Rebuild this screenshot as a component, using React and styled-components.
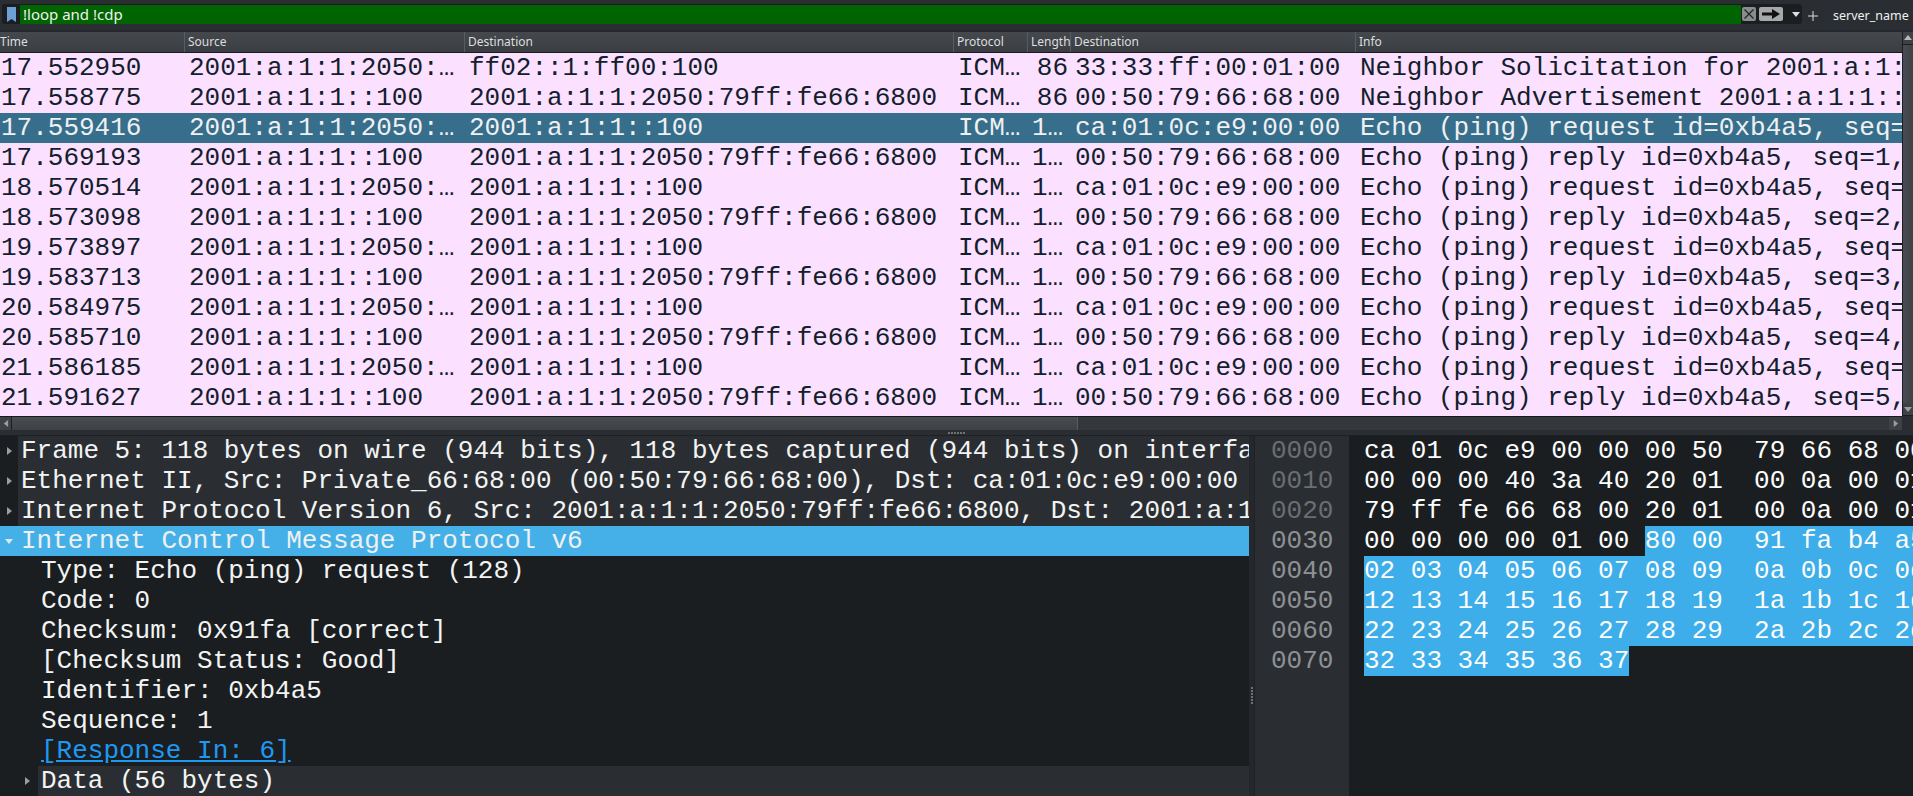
import React from "react";
import styled, { createGlobalStyle } from "styled-components";

const Global = createGlobalStyle`
  html, body { margin: 0; padding: 0; height: 100%; background: #2a2e32; overflow: hidden; }
  #root { height: 100%; }
`;

const Mono = `"Liberation Mono", monospace`;
const Sans = `"Noto Sans", sans-serif`;

const Page = styled.div`
  width: 1913px; height: 796px; display: flex; flex-direction: column;
  background: #2a2e32; overflow: hidden;
`;

/* Filter toolbar */
const Toolbar = styled.div`
  height: 32px; flex: none; display: flex; align-items: flex-start; box-sizing: border-box;
  padding: 4px 0 0 2px; background: #2a2e32; border-bottom: 2px solid #25282c;
`;
const FilterBox = styled.div`
  width: 1800px; height: 20px; display: flex; align-items: stretch; box-sizing: border-box;
  background: #1b1e20; border-radius: 3px; padding-top: 1px;
`;
const BookmarkSlot = styled.div`width: 18px; flex: none; display: flex; justify-content: center; align-items: center;`;
const FilterInput = styled.div`
  width: 1721px; flex: none; background: #006400; color: #eff0f1; font: 15px/19px ${Sans};
  padding-left: 3px; box-sizing: border-box; white-space: pre;
`;
const FilterButtons = styled.div`display: flex; align-items: center; padding: 0 0 1px 1px; gap: 3px;`;
const ClearButton = styled.div`
  width: 14px; height: 14px; background: #8a8c8e; border-radius: 2px; display: flex; align-items: center; justify-content: center;
`;
const ApplyButton = styled.div`
  width: 24px; height: 14px; background: #a6a8aa; border-radius: 2px; display: flex; align-items: center; justify-content: center;
`;
const Caret = styled.div`margin-left: 6px; display: flex;`;
const PlusButton = styled.div`margin-left: 6px; width: 10px; height: 24px; display: flex; align-items: center;`;
const ServerLabel = styled.div`margin-left: 15px; color: #eff0f1; font: 12.5px/24px ${Sans}; white-space: pre;`;

/* Packet list */
const ListArea = styled.div`height: 398px; flex: none; display: flex; flex-direction: column; background: #2a2e32;`;
const ListTop = styled.div`flex: 1; min-height: 0; display: flex;`;
const ListMain = styled.div`width: 1902px; flex: none; display: flex; flex-direction: column; overflow: hidden;`;
const HeaderRow = styled.div`
  height: 21px; flex: none; display: grid; grid-template-columns: var(--cols); box-sizing: border-box;
  background: linear-gradient(#45484c, #3a3d41); border-bottom: 1px solid #17191b;
`;
const HeaderCell = styled.div`
  font: 12px/20px ${Sans}; color: #dcdedf; white-space: nowrap; overflow: hidden;
  box-sizing: border-box; padding-left: ${p => (p.$first ? 0 : 3)}px; border-right: 1px solid #5a5d60;
  &:last-child { border-right: 0; }
`;
const Rows = styled.div`flex: 1; background: #fce0ff; overflow: hidden;`;
const Row = styled.div`
  height: 30px; display: grid; grid-template-columns: var(--cols);
  background: ${p => (p.$selected ? "#376e8c" : "#fce0ff")};
  color: ${p => (p.$selected ? "#eff0f1" : "#12202c")};
  font: 26px/30px ${Mono};
`;
const Cell = styled.div`
  white-space: pre; overflow: hidden; padding: 0 ${p => (p.$right ? 3 : 4)}px 0 ${p => (p.$first ? 1 : 4)}px;
  text-overflow: ${p => (p.$clip ? "clip" : "ellipsis")}; text-align: ${p => (p.$right ? "right" : "left")};
  min-width: 0;
`;
const VScroll = styled.div`
  width: 11px; flex: none; background: #34373b; display: flex; flex-direction: column; border-left: 1px solid #1b1e20; box-sizing: border-box;
`;
const VButton = styled.div`
  height: 13px; flex: none; background: #3e4145; display: flex; align-items: center; justify-content: center; border-bottom: 1px solid #1b1e20;
  box-sizing: border-box;
`;
const VThumb = styled.div`flex: 1; background: linear-gradient(90deg, #494c50, #3e4145);`;
const HScrollBar = styled.div`
  height: 14px; width: 1902px; flex: none; display: flex; background: #34373b; border-top: 1px solid #17191b; box-sizing: border-box;
`;
const HButton = styled.div`width: ${p => p.$width}px; flex: none; display: flex; align-items: center; justify-content: center; background: #3e4145; border: 0 solid #1b1e20; box-sizing: border-box;`;
const HThumb = styled.div`width: 1067px; flex: none; background: linear-gradient(#494c50, #3e4145); border-left: 1px solid #1b1e20; border-right: 1px solid #5a5d60; box-sizing: border-box;`;
const HTrough = styled.div`flex: 1;`;

const Splitter = styled.div`
  height: 6px; flex: none; display: flex; justify-content: center; align-items: center; background: #2a2e32; border-bottom: 1px solid #1f2225; box-sizing: border-box;
`;
const Grip = styled.div`
  display: flex; flex-direction: ${p => (p.$vertical ? "column" : "row")}; gap: 1px;
  & > i { display: block; width: 2px; height: 2px; background: #6e7174; }
`;

/* Lower panes */
const Lower = styled.div`flex: 1; display: flex; min-height: 0; background: #2a2e32;`;
const Tree = styled.div`width: 1249px; flex: none; background: #1b1e20; overflow: hidden;`;
const TreeRow = styled.div`
  height: 30px; display: flex; font: 26px/30px ${Mono}; white-space: pre; overflow: hidden;
  color: ${p => (p.$selected ? "#eff0f1" : "#f2f3f3")};
  background: ${p => (p.$selected ? "#45b0e8" : "#1b1e20")};
`;
const Gutter = styled.div`
  flex: none; width: ${p => p.$width}px; display: flex; align-items: center; justify-content: flex-end; padding-right: ${p => p.$pad || 5}px; box-sizing: border-box;
`;
const TreeLabel = styled.div`
  flex: 1; min-width: 0; overflow: hidden; padding-left: ${p => p.$pad ?? 3}px;
  background: ${p => (p.$shade ? "#2a2e32" : "transparent")};
`;
const LinkText = styled.span`color: #1d99f3; text-decoration: underline; text-underline-offset: 2px;`;
const Divider = styled.div`
  width: 6px; flex: none; background: #24272b; display: flex; align-items: flex-start; justify-content: center; padding-top: 251px; box-sizing: border-box;
  border-right: 1px solid #1f2225;
`;
const OffsetColumn = styled.div`
  width: 94px; flex: none; background: #2a2e32; padding-left: 16px; box-sizing: border-box;
`;
const OffsetLine = styled.div`font: 26px/30px ${Mono}; color: ${p => (p.$lit ? "#8e9193" : "#6b6e71")};`;
const HexColumn = styled.div`flex: 1; min-width: 0; background: #1b1e20; padding-left: 15px; overflow: hidden;`;
const HexLine = styled.div`height: 30px; font: 26px/30px ${Mono}; color: #fcfcfc; white-space: pre;`;
const HexMark = styled.span`background: #3daee9; display: inline-block; height: 30px; vertical-align: top;`;

const COLS = "185px 280px 489px 74px 43px 285px 546px";
const headers = ["Time", "Source", "Destination", "Protocol", "Length", "Destination", "Info"];
const H = "2001:a:1:1:2050:79ff:fe66:6800";
const L = "2001:a:1:1::100";
const req = (t, n) => [t, H, L, "ICMPv6", "118", "ca:01:0c:e9:00:00", `Echo (ping) request id=0xb4a5, seq=${n}, hop=64`];
const rep = (t, n) => [t, L, H, "ICMPv6", "118", "00:50:79:66:68:00", `Echo (ping) reply id=0xb4a5, seq=${n}, hop=64`];
const rows = [
  ["17.552950", H, "ff02::1:ff00:100", "ICMPv6", "86", "33:33:ff:00:01:00", "Neighbor Solicitation for 2001:a:1:1::100 from 00:50"],
  ["17.558775", L, H, "ICMPv6", "86", "00:50:79:66:68:00", "Neighbor Advertisement 2001:a:1:1::100 (rtr, sol, ovr)"],
  req("17.559416", 1), rep("17.569193", 1),
  req("18.570514", 2), rep("18.573098", 2),
  req("19.573897", 3), rep("19.583713", 3),
  req("20.584975", 4), rep("20.585710", 4),
  req("21.586185", 5), rep("21.591627", 5),
];

const hex = [
  ["0000", "ca 01 0c e9 00 00 00 50  79 66 68 00 86 dd 60 00", ""],
  ["0010", "00 00 00 40 3a 40 20 01  00 0a 00 01 00 01 20 50", ""],
  ["0020", "79 ff fe 66 68 00 20 01  00 0a 00 01 00 01 00 00", ""],
  ["0030", "00 00 00 00 01 00 ", "80 00  91 fa b4 a5 00 01 00 01"],
  ["0040", "", "02 03 04 05 06 07 08 09  0a 0b 0c 0d 0e 0f 10 11"],
  ["0050", "", "12 13 14 15 16 17 18 19  1a 1b 1c 1d 1e 1f 20 21"],
  ["0060", "", "22 23 24 25 26 27 28 29  2a 2b 2c 2d 2e 2f 30 31"],
  ["0070", "", "32 33 34 35 36 37"],
];

const Tri = ({ dir = "right", color = "#9b9d9f", size = 8 }) => {
  const pts = { right: "2,0 7,4 2,8", down: "0,2 8,2 4,7", left: "7,0 2,4 7,8", up: "0,6 8,6 4,1" }[dir];
  return <svg width={size} height={size} viewBox="0 0 8 8"><polygon points={pts} fill={color} /></svg>;
};

const GripDots = ({ vertical }) => (
  <Grip $vertical={vertical}>{Array.from({ length: 6 }).map((_, i) => <i key={i} />)}</Grip>
);

export default function App() {
  return (
    <Page style={{ "--cols": COLS }}>
      <Global />
      <Toolbar>
        <FilterBox>
          <BookmarkSlot>
            <svg width="9" height="15" viewBox="0 0 9 15"><path d="M0 0h9v15l-4.500-3L0 15z" fill="#6f9fd8" /></svg>
          </BookmarkSlot>
          <FilterInput>!loop and !cdp</FilterInput>
          <FilterButtons>
            <ClearButton>
              <svg width="12" height="12" viewBox="0 0 12 12"><path d="M1.500 1.500l9 9M10.500 1.500l-9 9" stroke="#222" strokeWidth="1.100" fill="none" /></svg>
            </ClearButton>
            <ApplyButton>
              <svg width="18" height="10" viewBox="0 0 18 10"><path d="M0 3.500h10V0l8 5-8 5V6.500H0z" fill="#111" /></svg>
            </ApplyButton>
            <Caret><Tri dir="down" color="#dcdedf" /></Caret>
          </FilterButtons>
        </FilterBox>
        <PlusButton>
          <svg width="10" height="10" viewBox="0 0 10 10"><path d="M5 0v10M0 5h10" stroke="#dcdedf" strokeWidth="1" fill="none" /></svg>
        </PlusButton>
        <ServerLabel>server_name</ServerLabel>
      </Toolbar>

      <ListArea>
        <ListTop>
          <ListMain>
            <HeaderRow>
              {headers.map((h, i) => <HeaderCell key={i} $first={i === 0}>{h}</HeaderCell>)}
            </HeaderRow>
            <Rows>
              {rows.map((r, i) => (
                <Row key={i} $selected={i === 2}>
                  {r.map((c, j) => (
                    <Cell key={j} $first={j === 0} $right={j === 4} $clip={j === 6}>{c}</Cell>
                  ))}
                </Row>
              ))}
            </Rows>
          </ListMain>
          <VScroll>
            <VButton><Tri dir="up" color="#b8babc" /></VButton>
            <VThumb />
            <VButton><Tri dir="down" color="#9b9d9f" /></VButton>
          </VScroll>
        </ListTop>
        <HScrollBar>
          <HButton $width={11}><Tri dir="left" size={7} /></HButton>
          <HThumb />
          <HTrough />
          <HButton $width={13}><Tri dir="right" size={7} /></HButton>
        </HScrollBar>
      </ListArea>

      <Splitter><GripDots /></Splitter>

      <Lower>
        <Tree>
          <TreeRow>
            <Gutter $width={18}><Tri size={8} /></Gutter>
            <TreeLabel $shade>Frame 5: 118 bytes on wire (944 bits), 118 bytes captured (944 bits) on interface -, id 0</TreeLabel>
          </TreeRow>
          <TreeRow>
            <Gutter $width={18}><Tri size={8} /></Gutter>
            <TreeLabel $shade>Ethernet II, Src: Private_66:68:00 (00:50:79:66:68:00), Dst: ca:01:0c:e9:00:00 (ca:01:0c:e9:00:00)</TreeLabel>
          </TreeRow>
          <TreeRow>
            <Gutter $width={18}><Tri size={8} /></Gutter>
            <TreeLabel $shade>Internet Protocol Version 6, Src: 2001:a:1:1:2050:79ff:fe66:6800, Dst: 2001:a:1:1::100</TreeLabel>
          </TreeRow>
          <TreeRow $selected>
            <Gutter $width={18}><Tri dir="down" color="#d4ecfa" /></Gutter>
            <TreeLabel>Internet Control Message Protocol v6</TreeLabel>
          </TreeRow>
          {["Type: Echo (ping) request (128)", "Code: 0", "Checksum: 0x91fa [correct]", "[Checksum Status: Good]", "Identifier: 0xb4a5", "Sequence: 1"].map(t => (
            <TreeRow key={t}><Gutter $width={38} /><TreeLabel $pad={3}>{t}</TreeLabel></TreeRow>
          ))}
          <TreeRow>
            <Gutter $width={38} /><TreeLabel $pad={3}><LinkText>[Response In: 6]</LinkText></TreeLabel>
          </TreeRow>
          <TreeRow>
            <Gutter $width={38} $pad={7}><Tri size={8} /></Gutter>
            <TreeLabel $shade $pad={3}>Data (56 bytes)</TreeLabel>
          </TreeRow>
        </Tree>
        <Divider><GripDots vertical /></Divider>
        <OffsetColumn>
          {hex.map(([o], i) => <OffsetLine key={o} $lit={i >= 3}>{o}</OffsetLine>)}
        </OffsetColumn>
        <HexColumn>
          {hex.map(([o, plain, marked]) => (
            <HexLine key={o}>
              {plain}{marked && <HexMark>{marked}</HexMark>}
            </HexLine>
          ))}
        </HexColumn>
      </Lower>
    </Page>
  );
}
